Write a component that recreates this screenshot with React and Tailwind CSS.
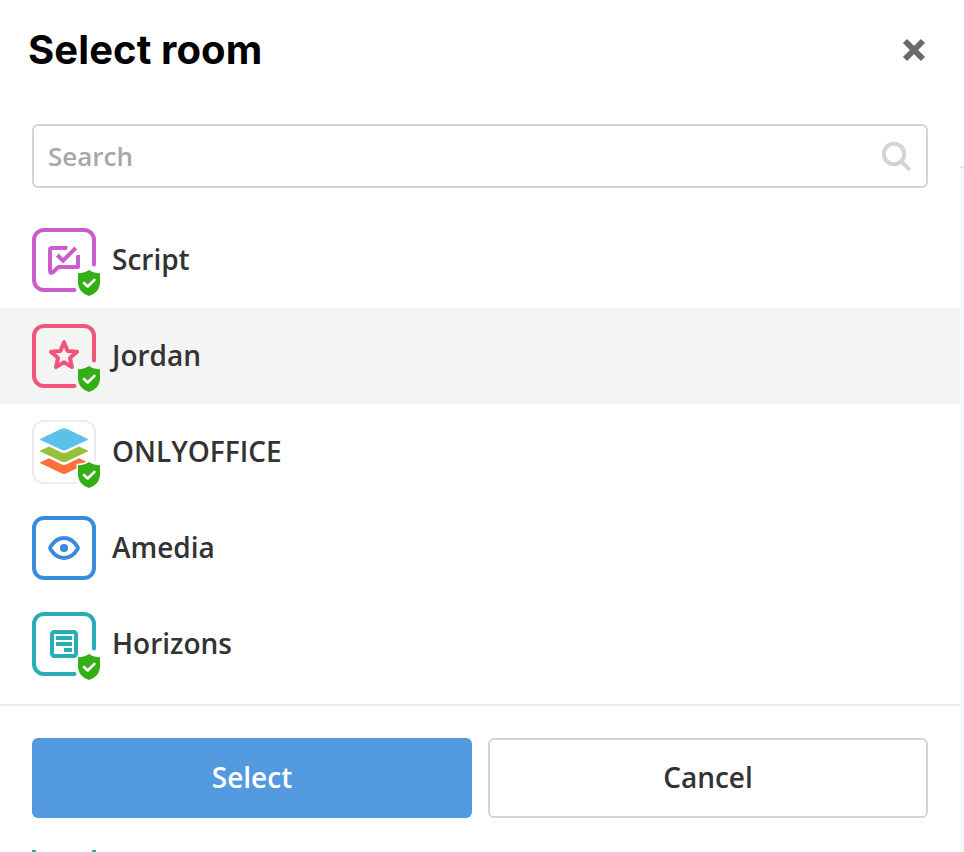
const OPEN = "font-['Open_Sans','Noto_Sans',sans-serif]";

function Shield() {
  return (
    <g>
      <path d="M57 42 C60.5 44.2 64 45.2 68 45.3 V54 C68 61.5 63.5 65.8 57 68 C50.5 65.8 46 61.5 46 54 V45.3 C50 45.2 53.5 44.2 57 42Z" fill="#35ad17" />
      <path d="M52 55 L55.7 58.5 L62.4 52" fill="none" stroke="#fff" strokeWidth="2.6" strokeLinecap="round" strokeLinejoin="round" />
    </g>
  );
}

function OpenFrame({ color }) {
  return (
    <path d="M42.5 62 H12 A10 10 0 0 1 2 52 V12 A10 10 0 0 1 12 2 H52 A10 10 0 0 1 62 12 V36.5" fill="none" stroke={color} strokeWidth="4" strokeLinecap="round" />
  );
}

function RoomIcon({ children }) {
  return (
    <svg width="72" height="72" viewBox="0 0 72 72" className="-mr-2 -mb-2 shrink-0">
      {children}
    </svg>
  );
}

function ScriptIcon() {
  return (
    <RoomIcon>
      <OpenFrame color="#cc5bcc" />
      <g fill="none" stroke="#cc5bcc" strokeWidth="4">
        <path d="M46 27 V39 H26.5 L20.8 44.3 Q18 46 18 42.5 V22 Q18 20 20 20 H35.5" strokeLinejoin="round" />
        <path d="M25.3 27 L31 32.7 L43.8 19.9" />
      </g>
      <path d="M38.4 17.5 L34 22.2 H38.4Z M43.8 28 L48.5 23.3 H43.8Z" fill="#fff" />
      <Shield />
    </RoomIcon>
  );
}

function StarIcon() {
  return (
    <RoomIcon>
      <OpenFrame color="#f2557c" />
      <path d="M32 18.2 L35.6 26.9 L45 27.7 L37.9 33.9 L40 43.1 L32 38.2 L24 43.1 L26.1 33.9 L19 27.7 L28.4 26.9Z" fill="none" stroke="#f2557c" strokeWidth="4" strokeLinejoin="round" />
      <Shield />
    </RoomIcon>
  );
}

function StackIcon() {
  return (
    <RoomIcon>
      <path d="M45 63 H12 A11 11 0 0 1 1 52 V12 A11 11 0 0 1 12 1 H52 A11 11 0 0 1 63 12 V41.5" fill="#fff" stroke="#ecedf2" strokeWidth="2" />
      <path d="M8.3 42.2 L17 38.2 L29.5 44.2 Q32 45.3 34.5 44.2 L47 38.2 L55.7 42.2 Q56.5 42.7 55.7 43.2 L34.5 53.3 Q32 54.5 29.5 53.3 L8.3 43.2 Q7.5 42.7 8.3 42.2Z" fill="#ff6f3d" />
      <path d="M8.3 30.5 L17 26.5 L29.5 32.5 Q32 33.6 34.5 32.5 L47 26.5 L55.7 30.5 Q56.5 31 55.7 31.5 L34.5 41.6 Q32 42.8 29.5 41.6 L8.3 31.5 Q7.5 31 8.3 30.5Z" fill="#95c038" />
      <path d="M8.5 18.7 L29.5 8.7 Q32 7.6 34.5 8.7 L55.5 18.7 Q56.5 19.3 55.5 19.9 L34.5 29.8 Q32 31 29.5 29.8 L8.5 19.9 Q7.5 19.3 8.5 18.7Z" fill="#5dc0e8" />
      <path d="M57 42 C60.5 44.2 64 45.2 68 45.3 V54 C68 61.5 63.5 65.8 57 68 C50.5 65.8 46 61.5 46 54 V45.3 C50 45.2 53.5 44.2 57 42Z" fill="#fff" stroke="#fff" strokeWidth="3" />
      <Shield />
    </RoomIcon>
  );
}

function EyeIcon() {
  return (
    <RoomIcon>
      <rect x="2" y="2" width="60" height="60" rx="10" fill="none" stroke="#388bde" strokeWidth="4" />
      <path d="M18.6 30.5 C26 19.2 38 19.2 45.4 30.5 Q46.4 32 45.4 33.5 C38 44.8 26 44.8 18.6 33.5 Q17.6 32 18.6 30.5Z" fill="none" stroke="#388bde" strokeWidth="4" />
      <circle cx="32" cy="32" r="4.1" fill="#388bde" />
    </RoomIcon>
  );
}

function FormIcon() {
  return (
    <RoomIcon>
      <OpenFrame color="#27acb8" />
      <rect x="20" y="20" width="24" height="24" rx="2.2" fill="none" stroke="#27acb8" strokeWidth="4" />
      <path d="M24 24h16v4H24z M24 30h16v4H24z M32 36h8v4h-8z" fill="#27acb8" />
      <Shield />
    </RoomIcon>
  );
}

const rooms = [
  { name: "Script", Icon: ScriptIcon },
  { name: "Jordan", Icon: StarIcon, selected: true },
  { name: "ONLYOFFICE", Icon: StackIcon },
  { name: "Amedia", Icon: EyeIcon },
  { name: "Horizons", Icon: FormIcon },
];

export default function App() {
  return (
    <div className={`flex h-[852px] w-[964px] overflow-hidden bg-white ${OPEN}`}>
      <main className="flex w-[960px] shrink-0 flex-col">
        <header className="flex h-[100px] shrink-0 items-center justify-between pr-[34px] pl-7">
          <h1 className="font-['Inter',sans-serif] text-[40px] leading-none font-bold tracking-[0.1px] text-black">Select room</h1>
          <button aria-label="Close" className="flex">
            <svg width="24" height="24" viewBox="0 0 24 24">
              <path d="M3 3 L21 21 M21 3 L3 21" stroke="#686b72" strokeWidth="6" />
            </svg>
          </button>
        </header>
        <label className="mx-8 mt-6 flex h-16 shrink-0 items-center justify-between rounded-md border-2 border-[#d0d5da] px-[14px]">
          <input placeholder="Search" className="w-[400px] text-[26px] font-semibold outline-none placeholder:text-[#a3a9ae] placeholder:opacity-100" />
          <svg width="32" height="32" viewBox="0 0 32 32" fill="none" stroke="#d0d5da" strokeWidth="4">
            <circle cx="14" cy="14" r="10.2" />
            <path d="M21 21 L29.8 29.8" />
          </svg>
        </label>
        <ul className="mt-6 h-[494px] shrink-0 overflow-hidden border-b-2 border-[#ecedf2]">
          {rooms.map(({ name, Icon, selected }) => (
            <li key={name} className={`flex h-24 items-start gap-4 px-8 pt-4 ${selected ? "bg-[#f3f4f4]" : ""}`}>
              <Icon />
              <span className="text-[28px] leading-[62px] font-semibold text-[#333333]">{name}</span>
            </li>
          ))}
        </ul>
        <footer className="mt-8 grid shrink-0 grid-cols-2 gap-4 px-8 text-[28px] font-semibold">
          <button className="h-20 rounded-md bg-[#5299e0] pb-0.5 text-white">Select</button>
          <button className="h-20 rounded-md border-2 border-[#d0d5da] bg-white pb-0.5 text-[#333333]">Cancel</button>
        </footer>
        <div className="mx-8 mt-8 flex h-0.5 w-16 shrink-0 justify-between">
          <span className="w-1 bg-[#27acb8]" />
          <span className="w-1 bg-[#27acb8]" />
        </div>
      </main>
      <aside className="mt-[166px] w-1 border-t-2 border-[#e2e4e7] bg-[#f8f9f9]" />
    </div>
  );
}
